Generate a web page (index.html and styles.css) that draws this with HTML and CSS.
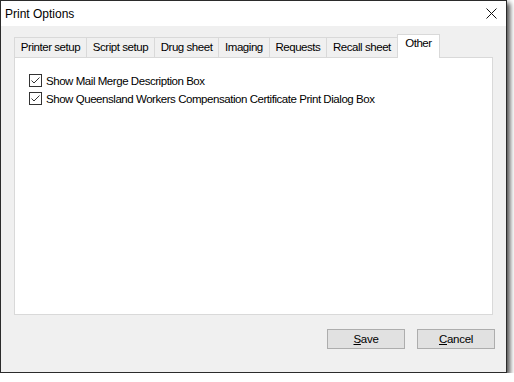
FILE: index.html
```html
<!DOCTYPE html>
<html>
  <head>
    <title>Print Options</title>
    <meta charset="UTF-8" />
    <link rel="stylesheet" href="styles.css">
  </head>

  <body>
    <div class="window">
      <div class="titlebar">
        <span class="title">Print Options</span>
        <button class="close_btn">
          <svg width="11" height="11" viewBox="0 0 11 11">
            <path d="M0.5 0.5 L10.5 10.5 M10.5 0.5 L0.5 10.5" stroke="#111" stroke-width="1" />
          </svg>
        </button>
      </div>

      <div class="content">
        <div class="tabs">
          <div class="tab">Printer setup</div>
          <div class="tab">Script setup</div>
          <div class="tab">Drug sheet</div>
          <div class="tab">Imaging</div>
          <div class="tab">Requests</div>
          <div class="tab">Recall sheet</div>
          <div class="tab selected">Other</div>
        </div>

        <div class="panel">
          <label class="check_row">
            <span class="check_box">
              <svg width="11" height="11" viewBox="0 0 11 11">
                <path d="M1.5 5.5 L4 8 L9.5 2.5" fill="none" stroke="#333" stroke-width="1" />
              </svg>
            </span>
            Show Mail Merge Description Box
          </label>
          <label class="check_row">
            <span class="check_box">
              <svg width="11" height="11" viewBox="0 0 11 11">
                <path d="M1.5 5.5 L4 8 L9.5 2.5" fill="none" stroke="#333" stroke-width="1" />
              </svg>
            </span>
            Show Queensland Workers Compensation Certificate Print Dialog Box
          </label>
        </div>

        <div class="actions">
          <button class="dlg_btn"><u>S</u>ave</button>
          <button class="dlg_btn"><u>C</u>ancel</button>
        </div>
      </div>
    </div>
  </body>
</html>
```

FILE: styles.css
```css
body {
  margin: 0;
  background: #fff;
  font-family: "Liberation Sans", Arial, sans-serif;
  font-size: 11.5px;
  letter-spacing: -0.45px;
  color: #000;
}

.window {
  width: 505px;
  height: 371px;
  border: 1px solid #2b2b2b;
  background: #f0f0f0;
  box-shadow: 3px 3px 5px rgba(0, 0, 0, 0.7);
  display: flex;
  flex-direction: column;
}

.titlebar {
  height: 25px;
  background: #fff;
  display: flex;
  align-items: center;
  justify-content: space-between;
  padding-left: 4px;
}

.title {
  font-size: 12px;
  letter-spacing: 0;
}

.close_btn {
  background: none;
  border: none;
  width: 30px;
  height: 25px;
  display: flex;
  align-items: center;
  justify-content: center;
  padding: 0;
}

.content {
  flex: 1;
  display: flex;
  flex-direction: column;
  padding: 9px 13px 0 13px;
}

.tabs {
  display: flex;
  align-items: flex-end;
  height: 23px;
  margin-bottom: -1px;
  position: relative;
  z-index: 1;
}

.tab {
  height: 20px;
  box-sizing: border-box;
  padding: 0 5.8px;
  line-height: 19px;
  background: #f0f0f0;
  border: 1px solid #d9d9d9;
  border-bottom: none;
  margin-right: -1px;
  margin-bottom: 1px;
}

.tab.selected {
  height: 24px;
  margin-bottom: 0;
  background: #fff;
  line-height: 16px;
  padding: 0 7.5px;
}

.panel {
  height: 258px;
  box-sizing: border-box;
  background: #fff;
  border: 1px solid #d9d9d9;
  padding: 16px 14px;
  display: flex;
  flex-direction: column;
  gap: 5px;
}

.check_row {
  display: flex;
  align-items: center;
  gap: 4px;
  height: 13px;
}

.check_box {
  width: 13px;
  height: 13px;
  box-sizing: border-box;
  border: 1px solid #333;
  background: #fff;
  display: flex;
}

.actions {
  display: flex;
  justify-content: flex-end;
  gap: 12px;
  margin-top: 14px;
  margin-right: -2px;
}

.dlg_btn {
  width: 78px;
  height: 20px;
  background: #e1e1e1;
  border: 1px solid #adadad;
  font-family: inherit;
  font-size: 11.5px;
  letter-spacing: -0.3px;
  padding: 0;
}
```
